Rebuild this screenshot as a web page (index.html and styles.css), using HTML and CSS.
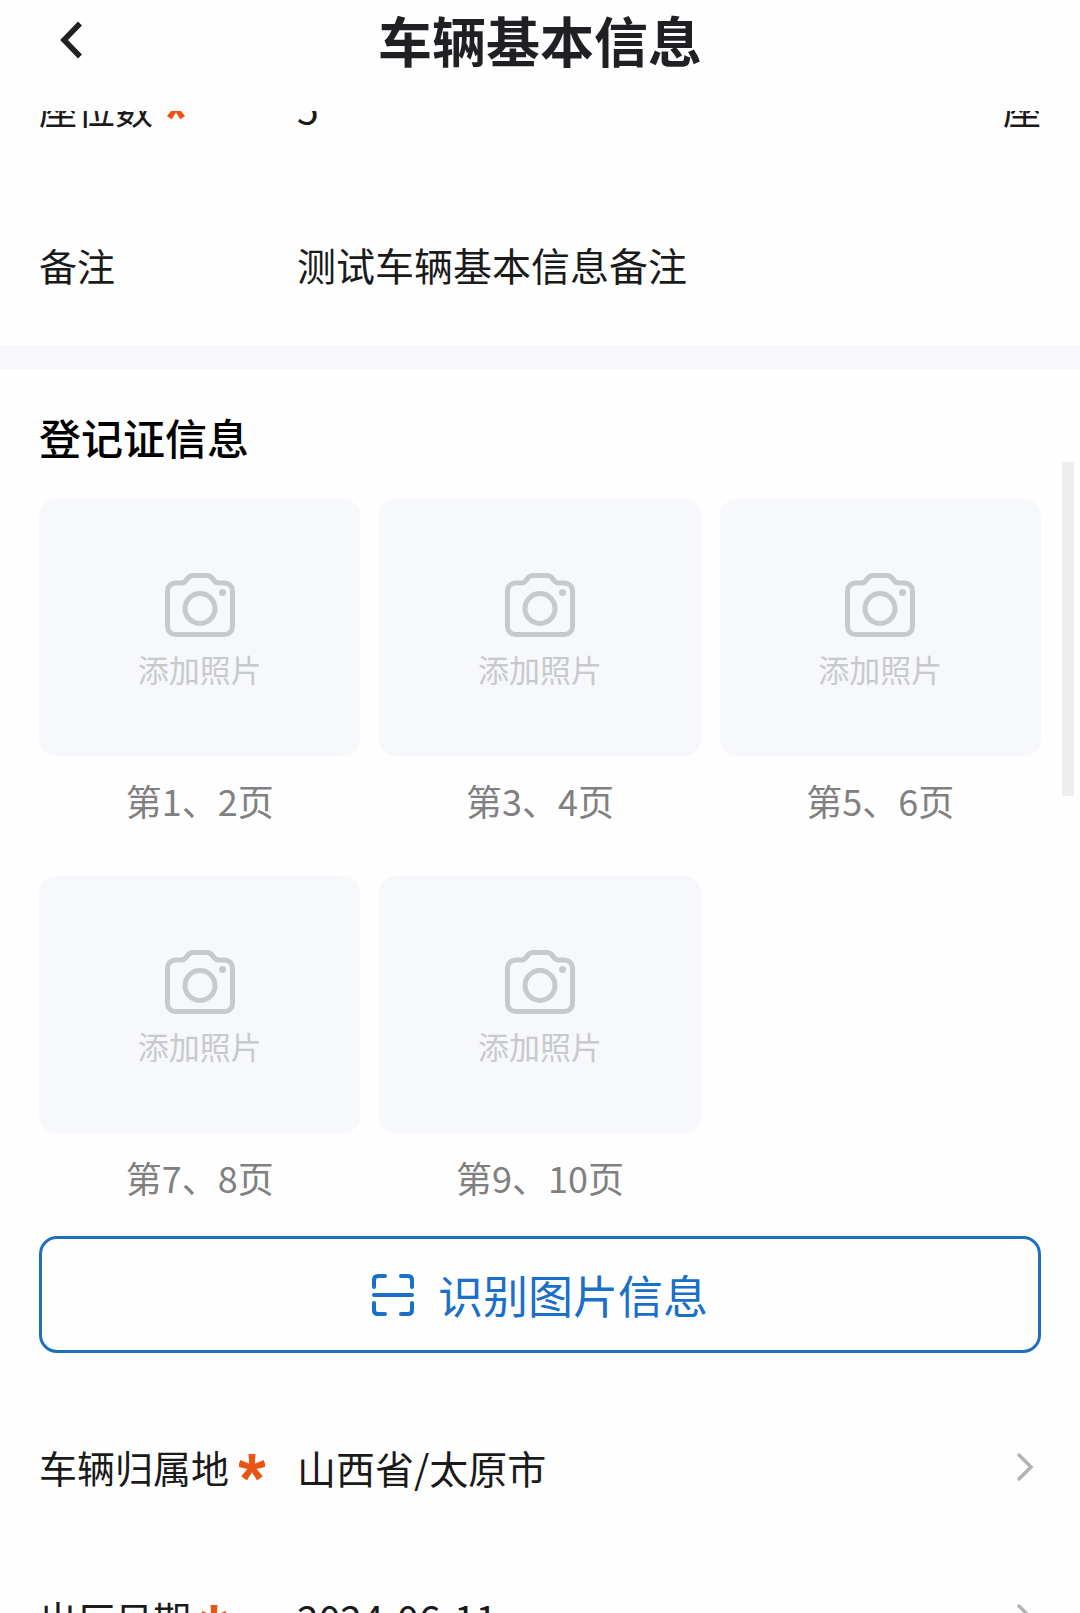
FILE: index.html
```html
<!DOCTYPE html>
<html lang="zh-CN">
<head>
  <meta charset="UTF-8" />
  <meta name="viewport" content="width=device-width, initial-scale=1.0"/>
  <title>车辆基本信息</title>
  <link rel="stylesheet" href="styles.css">
</head>
<body>
<!-- shared icons -->
<svg class="sprite" aria-hidden="true">
  <symbol id="icon-camera" viewBox="0 0 70 64">
    <path d="M10.500 10H16.500Q18.500 10 20 8.500L24 4Q25.500 2.500 27.500 2.500H42.500Q44.500 2.500 46 4L50 8.500Q51.500 10 53.500 10H59.500A8 8 0 0 1 67.500 18V53.500A8 8 0 0 1 59.500 61.500H10.500A8 8 0 0 1 2.500 53.500V18A8 8 0 0 1 10.500 10Z" fill="none" stroke="currentColor" stroke-width="5"/>
    <circle cx="35" cy="35.500" r="15" fill="none" stroke="currentColor" stroke-width="5"/>
    <circle cx="57.500" cy="19.500" r="3.500" fill="currentColor"/>
  </symbol>
  <symbol id="icon-star" viewBox="0 0 26 26">
    <g fill="currentColor">
      <path id="arm" d="M9.500 0H16.500L15.500 14H10.500Z"/>
      <use href="#arm" transform="rotate(72 13 13.500)"/>
      <use href="#arm" transform="rotate(144 13 13.500)"/>
      <use href="#arm" transform="rotate(216 13 13.500)"/>
      <use href="#arm" transform="rotate(288 13 13.500)"/>
    </g>
  </symbol>
  <symbol id="icon-arrow" viewBox="0 0 18 30">
    <path d="M3 3L15 15L3 27" fill="none" stroke="currentColor" stroke-width="3.500" stroke-linecap="round"/>
  </symbol>
</svg>

<header class="navbar">
  <button class="back-btn" type="button" aria-label="返回">
    <svg width="22" height="38" viewBox="0 0 22 38"><path d="M20 2.500L4 19L20 35.500" fill="none" stroke="currentColor" stroke-width="5.500"/></svg>
  </button>
  <h1>车辆基本信息</h1>
</header>

<main class="page">
  <div class="content">
    <section class="block">
      <div class="row">
        <label for="seats">座位数<svg class="star star-small"><use href="#icon-star"/></svg></label>
        <input type="text" id="seats" value="5">
        <span class="unit">座</span>
      </div>
      <div class="row row-remark">
        <label for="remark">备注</label>
        <input type="text" id="remark" value="测试车辆基本信息备注">
      </div>
    </section>

    <section class="block">
      <h2>登记证信息</h2>
      <div class="photos">
        <figure>
          <button class="photo-btn" type="button"><svg class="camera"><use href="#icon-camera"/></svg>添加照片</button>
          <figcaption>第1、2页</figcaption>
        </figure>
        <figure>
          <button class="photo-btn" type="button"><svg class="camera"><use href="#icon-camera"/></svg>添加照片</button>
          <figcaption>第3、4页</figcaption>
        </figure>
        <figure>
          <button class="photo-btn" type="button"><svg class="camera"><use href="#icon-camera"/></svg>添加照片</button>
          <figcaption>第5、6页</figcaption>
        </figure>
        <figure>
          <button class="photo-btn" type="button"><svg class="camera"><use href="#icon-camera"/></svg>添加照片</button>
          <figcaption>第7、8页</figcaption>
        </figure>
        <figure>
          <button class="photo-btn" type="button"><svg class="camera"><use href="#icon-camera"/></svg>添加照片</button>
          <figcaption>第9、10页</figcaption>
        </figure>
      </div>

      <button class="scan-btn" type="button">
        <svg width="42" height="42" viewBox="0 0 42 42" fill="none" stroke="currentColor" stroke-width="4" stroke-linecap="round">
          <path d="M2 13V6Q2 2 6 2H13M29 2H36Q40 2 40 6V13M40 29V36Q40 40 36 40H29M13 40H6Q2 40 2 36V29M2 21H40"/>
        </svg>
        识别图片信息
      </button>

      <div class="row">
        <label for="region">车辆归属地<svg class="star"><use href="#icon-star"/></svg></label>
        <input type="text" id="region" value="山西省/太原市" readonly>
        <svg class="arrow"><use href="#icon-arrow"/></svg>
      </div>
      <div class="row">
        <label for="madeDate">出厂日期<svg class="star"><use href="#icon-star"/></svg></label>
        <input type="text" id="madeDate" value="2024-06-11" readonly>
        <svg class="arrow"><use href="#icon-arrow"/></svg>
      </div>
    </section>
  </div>
  <div class="scrollbar"></div>
</main>
</body>
</html>
```
FILE: styles.css
```css
* {
  box-sizing: border-box;
}
body {
  margin: 0;
  height: 100vh;
  display: flex;
  flex-direction: column;
  overflow: hidden;
  font-family: "Noto Sans CJK SC", sans-serif;
  background: #fefefe;
  color: #1a1a1a;
}
button, input {
  font-family: inherit;
  color: inherit;
  background: none;
  border: none;
  padding: 0;
}
button {
  cursor: pointer;
}
.sprite {
  display: none;
}

/* top bar */
.navbar {
  flex: none;
  display: grid;
  grid-template-columns: 1fr auto 1fr;
  align-items: center;
  padding: 0 60px 31px;
  color: #1f2024;
}
.navbar h1 {
  margin: 0;
  font-size: 54px;
  line-height: 80px;
  font-weight: 700;
}
.back-btn {
  justify-self: start;
  display: flex;
}

/* the list is scrolled half a row under the bar */
.page {
  flex: 1;
  min-height: 0;
  position: relative;
  overflow: hidden;
}
.content {
  margin-top: -79px;
}
.block {
  padding: 0 39px;
}
.block + .block {
  border-top: 24px solid #f7f7fc;
  padding-top: 38px;
}

.row {
  display: flex;
  align-items: center;
  height: 151px;
  font-size: 38px;
}
.row-remark {
  height: 162px;
}
.row label {
  flex: none;
  width: 258px;
  display: flex;
  align-items: center;
  gap: 10px;
}
.row input {
  flex: 1;
  min-width: 0;
  font-size: 39px;
  line-height: 58px;
  outline: none;
}
.star {
  width: 26px;
  height: 26px;
  color: #ea5514;
}
.star-small {
  width: 22px;
  height: 22px;
  margin-left: 2px;
}
.arrow {
  width: 18px;
  height: 30px;
  margin-right: 7px;
  color: #b2b2b2;
}

h2 {
  margin: 0 0 32px;
  font-size: 42px;
  line-height: 60px;
  font-weight: 500;
  color: #000;
}
.photos {
  display: grid;
  grid-template-columns: repeat(3, 1fr);
  gap: 50px 19px;
}
.photos figure {
  margin: 0;
}
.photo-btn {
  width: 100%;
  aspect-ratio: 5 / 4;
  padding-top: 6px;
  display: flex;
  flex-direction: column;
  align-items: center;
  justify-content: center;
  gap: 12px;
  border-radius: 16px;
  background: #f7f8fc;
  color: #c8c9cc;
  font-size: 31px;
  line-height: 40px;
}
.camera {
  width: 70px;
  height: 64px;
}
.photos figcaption {
  padding-top: 18px;
  font-size: 36px;
  line-height: 52px;
  text-align: center;
  color: #808080;
}

.scan-btn {
  width: 100%;
  margin: 33px 0 38px;
  padding: 24px;
  display: flex;
  align-items: center;
  justify-content: center;
  gap: 24px;
  border: 3px solid #1f6fbf;
  border-radius: 18px;
  color: #1a6fc9;
  font-size: 45px;
  line-height: 63px;
}

.scrollbar {
  position: absolute;
  top: 23.4%;
  right: 6px;
  width: 12px;
  height: 22.2%;
  background: #eee;
}
```
